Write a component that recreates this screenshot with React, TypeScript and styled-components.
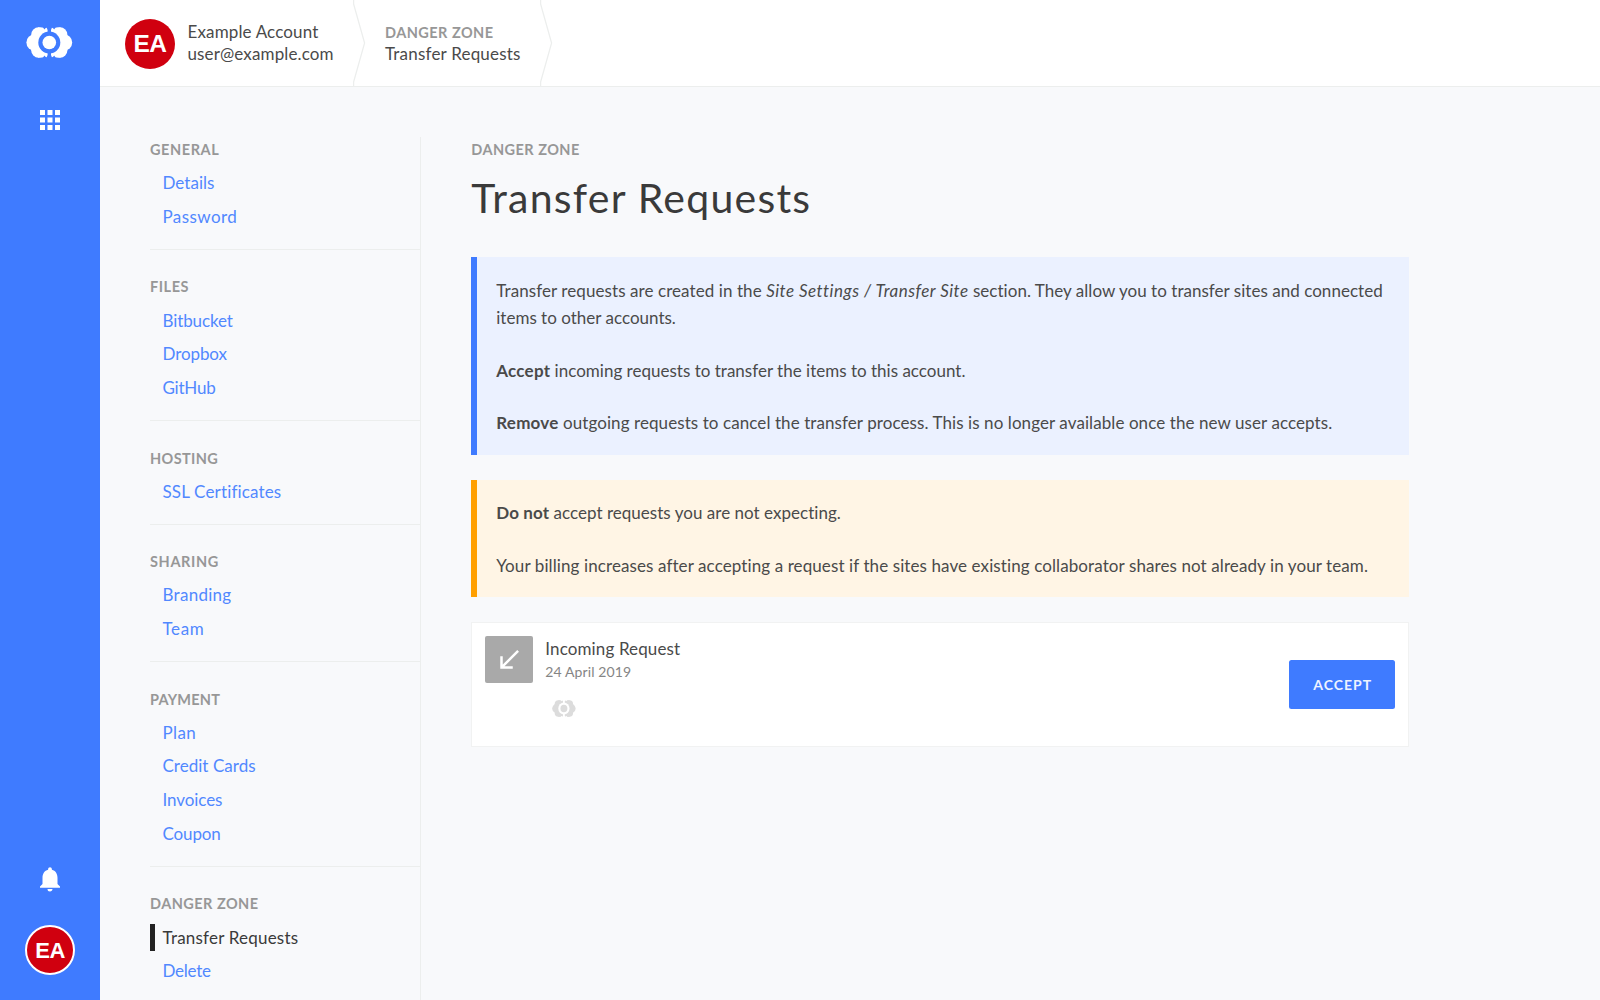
import React from "react";
import styled, { createGlobalStyle } from "styled-components";
import { MdApps, MdCallReceived, MdNotifications } from "react-icons/md";

const blue = "#3f7bff";
const line = "#eceeed";

const GlobalStyle = createGlobalStyle`
  *, *::before, *::after { box-sizing: border-box; }
  html, body { margin: 0; height: 100%; overflow: hidden; }
  body {
    background: #f8f9fb;
    color: #4a4a4a;
    font-family: Lato, "Open Sans", sans-serif;
    font-size: 17px;
  }
`;

const Page = styled.div`
  display: flex;
  height: 1000px;
  overflow: hidden;
`;

const Rail = styled.aside`
  display: flex;
  flex-direction: column;
  align-items: center;
  flex: 0 0 100px;
  padding: 27px 0 25px;
  background: ${blue};
  color: #fff;
`;

const RailButton = styled.a<{ $top?: string; $bottom?: string }>`
  display: flex;
  margin-top: ${(p) => p.$top ?? "0"};
  margin-bottom: ${(p) => p.$bottom ?? "0"};
`;

const Avatar = styled.div<{ $ringed?: boolean }>`
  display: flex;
  align-items: center;
  justify-content: center;
  flex: none;
  width: 50px;
  height: 50px;
  padding-top: 2px;
  border-radius: 50%;
  border: ${(p) => (p.$ringed ? "2px solid #fff" : "none")};
  background: #d0000f;
  color: #fff;
  font: 700 ${(p) => (p.$ringed ? 22 : 24.5)}px/1 "Liberation Sans", sans-serif;
  letter-spacing: -0.6px;
`;

const AccountAvatar = styled(Avatar)`
  margin-top: 1px;
`;

const Body = styled.div`
  display: flex;
  flex-direction: column;
  flex: 1;
  min-width: 0;
`;

const TopBar = styled.header`
  display: flex;
  align-items: center;
  flex: 0 0 87px;
  padding-left: 25px;
  background: #fff;
  border-bottom: 1px solid ${line};
`;

const Crumb = styled.div<{ $width: number; $indent: number }>`
  display: flex;
  flex-direction: column;
  width: ${(p) => p.$width}px;
  padding-left: ${(p) => p.$indent}px;
  line-height: 22.5px;
  white-space: nowrap;
`;

const Chevron = styled.svg`
  flex: none;
  width: 13px;
  height: 86px;
  fill: none;
  stroke: ${line};
  stroke-width: 1.25;
`;

const Spaced = styled.span<{ $ls: number }>`
  letter-spacing: ${(p) => p.$ls}px;
`;

const Eyebrow = styled.div<{ $ls: number }>`
  height: 24.75px;
  padding-top: 1px;
  color: #979797;
  font-size: 14.5px;
  font-weight: 700;
  line-height: 24.75px;
  letter-spacing: ${(p) => p.$ls}px;
  white-space: nowrap;
`;

const CrumbEyebrow = styled(Eyebrow)`
  height: 22.5px;
  padding-top: 0;
  line-height: 23.5px;
`;

const Content = styled.div`
  display: flex;
  flex: 1;
  min-height: 0;
  padding: 50px 0 0 50px;
`;

const Nav = styled.nav`
  flex: 0 0 271px;
  border-right: 1px solid ${line};
`;

const NavSection = styled.section`
  padding-bottom: 12.2px;
  & + & {
    padding-top: 24.5px;
    border-top: 1px solid ${line};
  }
`;

const NavList = styled.ul`
  list-style: none;
  margin: 7.45px 0 0;
  padding: 0;
`;

const NavItem = styled.li<{ $current?: boolean; $ls: number }>`
  height: 27px;
  margin-bottom: 6.75px;
  padding-left: ${(p) => (p.$current ? 7.5 : 12.5)}px;
  border-left: ${(p) => (p.$current ? "5px solid #222" : "none")};
  color: ${(p) => (p.$current ? "#3a3a3a" : "#5188ff")};
  line-height: 27px;
  letter-spacing: ${(p) => p.$ls}px;
`;

const Main = styled.main`
  width: 937.5px;
  margin-left: 50.25px;
`;

const Title = styled.h1`
  margin: 10.75px 0 34.75px;
  color: #3a3a3a;
  font-size: 41px;
  font-weight: 400;
  line-height: 50px;
  letter-spacing: 1.25px;
`;

const Notice = styled.div<{ $accent: string; $fill: string }>`
  margin-bottom: 25px;
  padding: 19.5px 18.5px 18px 19px;
  border-left: 6px solid ${(p) => p.$accent};
  background: ${(p) => p.$fill};
`;

const Paragraph = styled.p`
  margin: 0;
  line-height: 27.5px;
  & + & {
    margin-top: 25px;
  }
`;

const Strong = styled.strong<{ $ls: number }>`
  font-weight: 700;
  letter-spacing: ${(p) => p.$ls}px;
`;

const Emphasis = styled.em`
  letter-spacing: 0.48px;
`;

const Card = styled.article`
  display: flex;
  align-items: center;
  height: 125px;
  padding: 12.5px;
  border: 1px solid #f1f2f2;
  background: #fff;
`;

const Direction = styled.div`
  display: flex;
  align-items: center;
  justify-content: center;
  align-self: flex-start;
  width: 48px;
  height: 47.5px;
  border-radius: 2px;
  background: #a9a9a9;
  color: #fff;
`;

const CardText = styled.div`
  align-self: flex-start;
  flex: 1;
  padding-left: 12.5px;
`;

const CardTitle = styled.div`
  line-height: 25.5px;
  letter-spacing: 0.13px;
`;

const CardDate = styled.div`
  color: #858585;
  font-size: 14px;
  line-height: 22.5px;
  letter-spacing: 0.12px;
`;

const SiteIcon = styled.div`
  display: flex;
  padding: 16px 0 0 6.5px;
  color: #dcdcdc;
`;

const Accept = styled.button`
  width: 106.25px;
  height: 48.75px;
  padding: 0 0 0 1px;
  border: 0;
  border-radius: 2.5px;
  background: ${blue};
  color: #eef3ff;
  font: 700 14px/1 Lato, sans-serif;
  letter-spacing: 1px;
`;

/* Two lobed halves wrapped around a dot, with a ring cut out between them. */
function Logo({ id, width, height }: { id: string; width: number; height: number }) {
  const half = (
    <>
      <circle cx="38.6" cy="35" r="7.4" />
      <circle cx="34.4" cy="42.8" r="8" />
      <circle cx="38.6" cy="50.6" r="7.4" />
      <path d="M38 27.7h4.2q1 0 1.6 1l.6 1 .8-1q.6-.7 1.5-.7l.9 2.2v25.2l-.9 2.2q-.9 0-1.5-.7l-.8-1-.6 1q-.6 1-1.6 1H38z" />
    </>
  );
  return (
    <svg width={width} height={height} viewBox="26 27.3 48 31" fill="currentColor" preserveAspectRatio="none">
      <mask id={id}>
        <rect x="20" y="20" width="60" height="50" fill="#fff" />
        <circle cx="49.3" cy="42.8" r="11" fill="#000" />
      </mask>
      <g mask={`url(#${id})`}>
        {half}
        <g transform="translate(98.6 0) scale(-1 1)">{half}</g>
      </g>
      <circle cx="49.3" cy="42.8" r="6.8" />
    </svg>
  );
}

const Divider = () => (
  <Chevron viewBox="0 0 13 86">
    <path d="M.6 0v4L11.6 43 .6 82v4" />
  </Chevron>
);

type Item = { label: string; ls: number; current?: boolean };
const sections: { title: string; ls: number; items: Item[] }[] = [
  { title: "GENERAL", ls: 0.57, items: [{ label: "Details", ls: 0.04 }, { label: "Password", ls: 0.43 }] },
  {
    title: "FILES",
    ls: 0.53,
    items: [
      { label: "Bitbucket", ls: -0.1 },
      { label: "Dropbox", ls: -0.09 },
      { label: "GitHub", ls: -0.24 },
    ],
  },
  { title: "HOSTING", ls: 0.38, items: [{ label: "SSL Certificates", ls: 0.15 }] },
  { title: "SHARING", ls: 0.64, items: [{ label: "Branding", ls: 0.28 }, { label: "Team", ls: 0.6 }] },
  {
    title: "PAYMENT",
    ls: 0.24,
    items: [
      { label: "Plan", ls: 0.4 },
      { label: "Credit Cards", ls: 0.03 },
      { label: "Invoices", ls: -0.08 },
      { label: "Coupon", ls: -0.12 },
    ],
  },
  {
    title: "DANGER ZONE",
    ls: 0.46,
    items: [
      { label: "Transfer Requests", ls: 0.21, current: true },
      { label: "Delete", ls: -0.24 },
    ],
  },
];

export default function App() {
  return (
    <Page>
      <GlobalStyle />
      <Rail>
        <Logo id="rail-logo" width={48} height={31} />
        <RailButton $top="47px">
          <MdApps size={30} />
        </RailButton>
        <RailButton $top="auto" $bottom="31px">
          <MdNotifications size={30} />
        </RailButton>
        <Avatar $ringed>EA</Avatar>
      </Rail>
      <Body>
        <TopBar>
          <AccountAvatar>EA</AccountAvatar>
          <Crumb $width={177.5} $indent={12.5}>
            <Spaced $ls={0.14}>Example Account</Spaced>
            <Spaced $ls={0.13}>user@example.com</Spaced>
          </Crumb>
          <Divider />
          <Crumb $width={174.5} $indent={19.5}>
            <CrumbEyebrow $ls={0.46}>DANGER ZONE</CrumbEyebrow>
            <Spaced $ls={0.2}>Transfer Requests</Spaced>
          </Crumb>
          <Divider />
        </TopBar>
        <Content>
          <Nav>
            {sections.map((section) => (
              <NavSection key={section.title}>
                <Eyebrow $ls={section.ls}>{section.title}</Eyebrow>
                <NavList>
                  {section.items.map((item) => (
                    <NavItem key={item.label} $ls={item.ls} $current={item.current}>
                      {item.label}
                    </NavItem>
                  ))}
                </NavList>
              </NavSection>
            ))}
          </Nav>
          <Main>
            <Eyebrow $ls={0.46}>DANGER ZONE</Eyebrow>
            <Title>Transfer Requests</Title>
            <Notice $accent={blue} $fill="#ebf1ff">
              <Paragraph>
                <Spaced $ls={0.08}>Transfer requests are created in the </Spaced>
                <Emphasis>Site Settings / Transfer Site</Emphasis>{" "}
                <Spaced $ls={0.035}>section. They allow you to transfer sites and connected</Spaced>{" "}
                <Spaced $ls={0.01}>items to other accounts.</Spaced>
              </Paragraph>
              <Paragraph>
                <Strong $ls={0.23}>Accept</Strong>
                <Spaced $ls={0.01}> incoming requests to transfer the items to this account.</Spaced>
              </Paragraph>
              <Paragraph>
                <Strong $ls={0.22}>Remove</Strong>
                <Spaced $ls={0.082}>
                  {" "}
                  outgoing requests to cancel the transfer process. This is no longer available once the new user
                  accepts.
                </Spaced>
              </Paragraph>
            </Notice>
            <Notice $accent="#ff9f00" $fill="#fff5e5">
              <Paragraph>
                <Strong $ls={0.1}>Do not</Strong>
                <Spaced $ls={0.03}> accept requests you are not expecting.</Spaced>
              </Paragraph>
              <Paragraph>
                <Spaced $ls={0.099}>
                  Your billing increases after accepting a request if the sites have existing collaborator shares not
                  already in your team.
                </Spaced>
              </Paragraph>
            </Notice>
            <Card>
              <Direction>
                <MdCallReceived size={30} />
              </Direction>
              <CardText>
                <CardTitle>Incoming Request</CardTitle>
                <CardDate>24 April 2019</CardDate>
                <SiteIcon>
                  <Logo id="site-logo" width={24.5} height={17} />
                </SiteIcon>
              </CardText>
              <Accept>ACCEPT</Accept>
            </Card>
          </Main>
        </Content>
      </Body>
    </Page>
  );
}
